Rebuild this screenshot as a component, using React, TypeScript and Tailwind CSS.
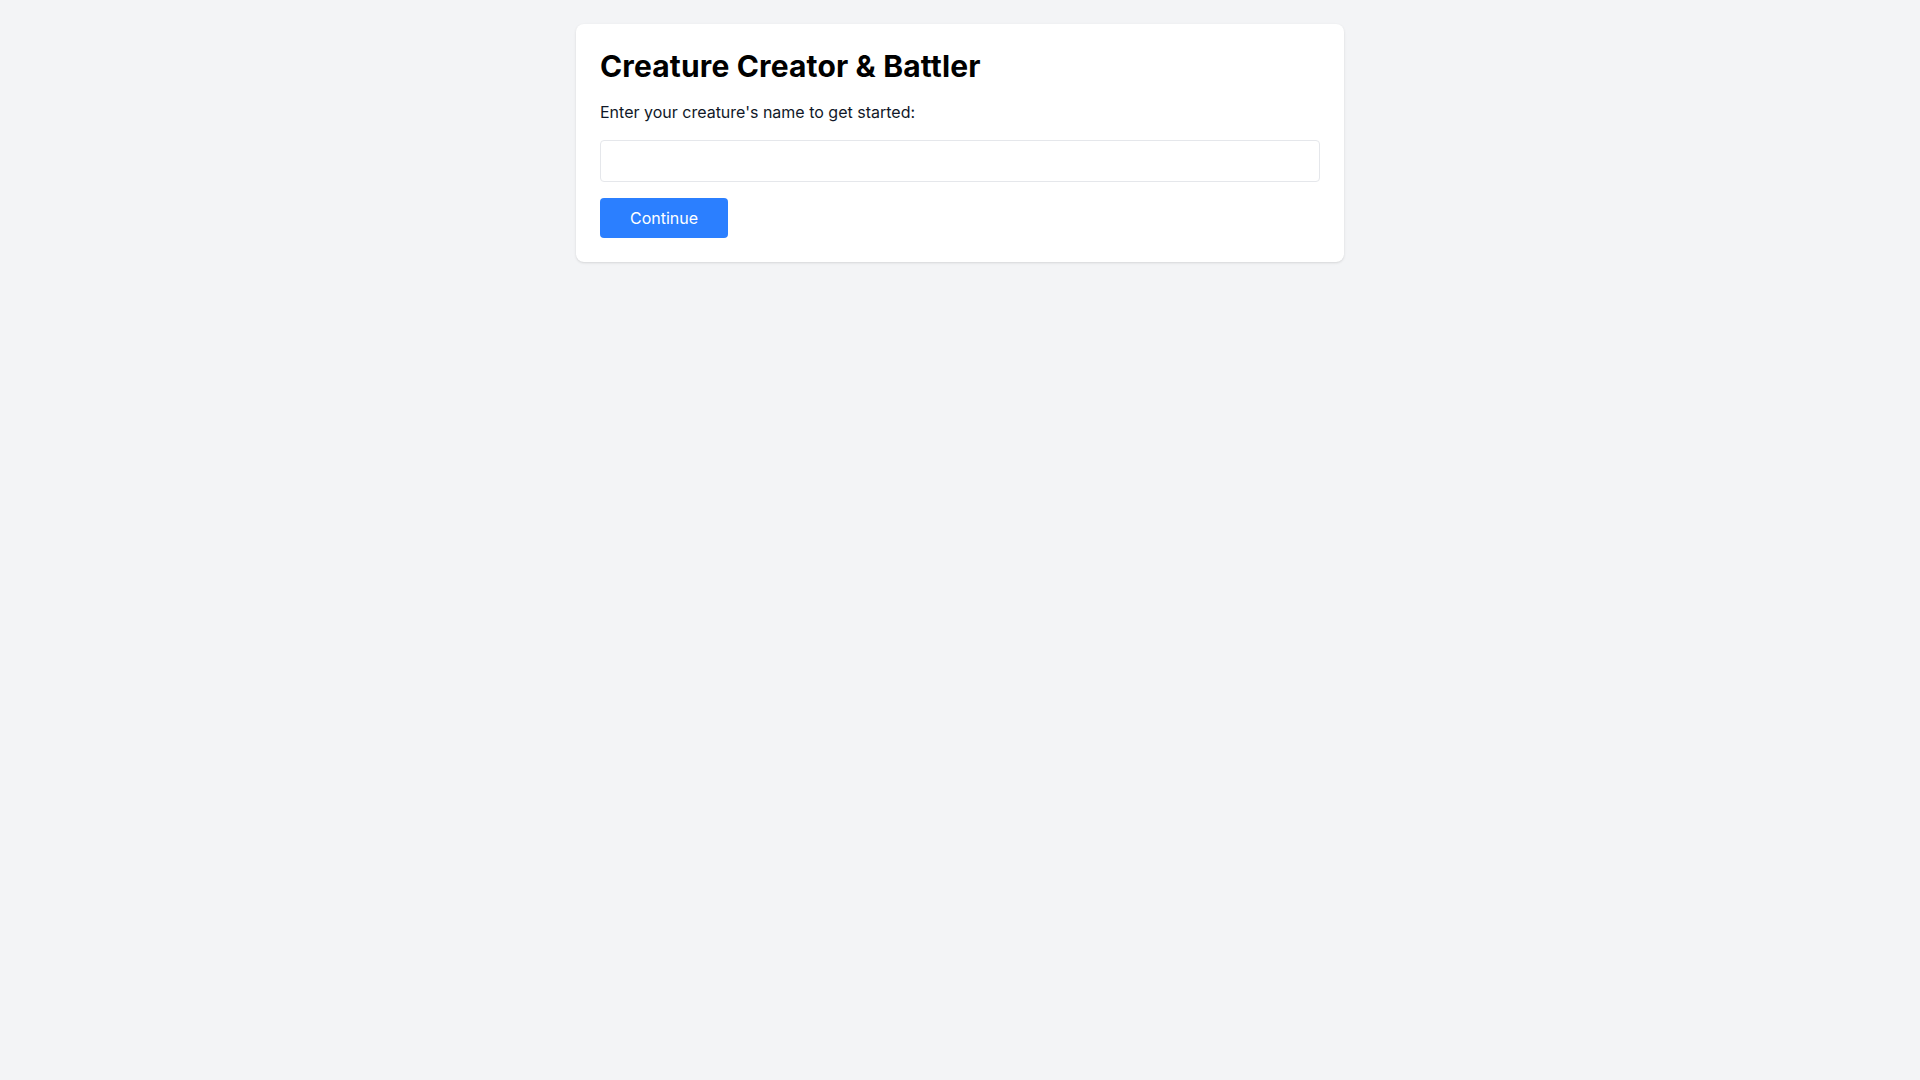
import React from "react";

export default function App() {
  return (
    <div className="min-h-screen bg-gray-100 pt-6" style={{ fontFamily: "Inter, 'Liberation Sans', sans-serif" }}>
      <div className="mx-auto max-w-3xl rounded-lg bg-white p-6 shadow">
        <h1 className="mb-4 text-3xl font-bold tracking-[0.005em] text-black">Creature Creator &amp; Battler</h1>
        <p className="mb-4 text-base text-gray-900">Enter your creature's name to get started:</p>
        <input
          type="text"
          className="mb-4 block w-full rounded border border-gray-200 px-3 py-2 text-base outline-none"
        />
        <button className="rounded bg-blue-500 px-[30px] py-2 text-base text-white">Continue</button>
      </div>
    </div>
  );
}
